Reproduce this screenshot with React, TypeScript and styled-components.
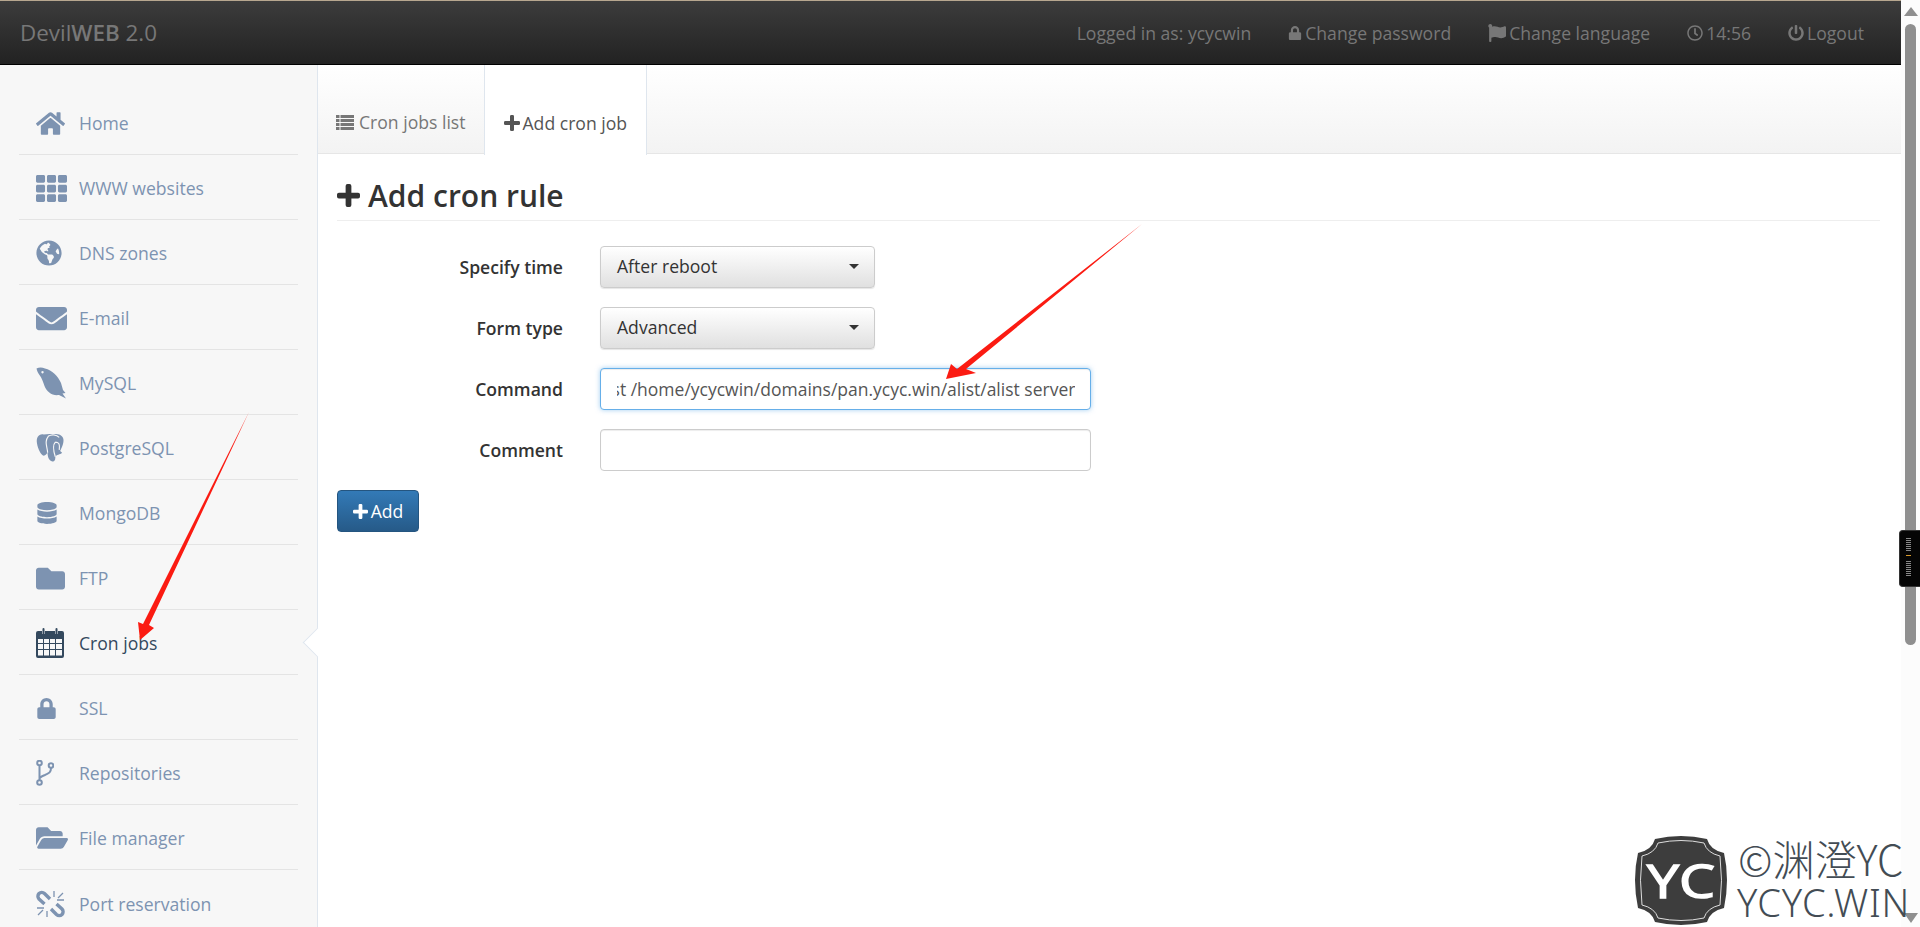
import React, { useEffect, useRef } from "react";
import styled, { createGlobalStyle } from "styled-components";
import {
  FaHome, FaTh, FaGlobeAmericas, FaEnvelope, FaDatabase, FaFolder, FaLock, FaFolderOpen,
  FaFlag, FaRegClock, FaPowerOff,
} from "react-icons/fa";

const Global = createGlobalStyle`
  html, body { margin: 0; padding: 0; height: 100%; overflow: hidden; background: #fff; }
  * { box-sizing: border-box; }
  body { font-family: "Open Sans", "Liberation Sans", sans-serif; }
`;

const Shell = styled.div`
  position: relative;
  display: flex;
  width: 1920px;
  height: 927px;
  overflow: hidden;
`;
const Page = styled.div`
  flex: 1;
  min-width: 0;
  display: flex;
  flex-direction: column;
`;
const TopBar = styled.header`
  height: 65px;
  flex: none;
  display: flex;
  align-items: center;
  justify-content: space-between;
  padding: 0 37px 0 20px;
  border-top: 1px solid #b7a78f;
  border-bottom: 1px solid #000;
  background: linear-gradient(#3c3c3c, #222);
  color: #777;
  font-size: 17.6px;
`;
const Brand = styled.div`
  font-size: 22.4px;
  b { font-weight: 600; }
`;
const TopNav = styled.nav`
  display: flex;
  align-items: center;
  gap: 37px;
`;
const TopItem = styled.span`
  display: flex;
  align-items: center;
  gap: 3px;
  svg { flex: none; }
`;
const Body = styled.div`
  flex: 1;
  min-height: 0;
  display: flex;
`;
const Sidebar = styled.aside`
  width: 318px;
  flex: none;
  padding: 25px 19px 0;
  background: #f7f7f7;
  border-right: 1px solid #dfe6ee;
`;
const NavRow = styled.div<{ $active?: boolean }>`
  position: relative;
  height: 65px;
  display: flex;
  align-items: center;
  padding: 2px 0 0 17px;
  border-bottom: 1px solid #e4e4e4;
  color: ${(p) => (p.$active ? "#34495e" : "#7d93b1")};
  font-size: 17.6px;
  &:last-child { border-bottom: 0; }
`;
const NavIcon = styled.span`
  width: 43px;
  flex: none;
  display: flex;
  align-items: center;
`;
const Notch = styled.span`
  position: absolute;
  right: -30px;
  top: 22px;
  width: 21px;
  height: 21px;
  background: #fff;
  border-left: 1px solid #dfe6ee;
  border-bottom: 1px solid #dfe6ee;
  transform: rotate(45deg);
`;
const Main = styled.main`
  flex: 1;
  min-width: 0;
`;
const TabBar = styled.div`
  height: 89px;
  display: flex;
  background: linear-gradient(#fff, #f3f3f3);
  border-bottom: 1px solid #e6e6e6;
`;
const Tab = styled.div<{ $active?: boolean }>`
  display: flex;
  align-items: center;
  gap: ${(p) => (p.$active ? "3px" : "5px")};
  height: ${(p) => (p.$active ? "90px" : "88px")};
  padding: 26px ${(p) => (p.$active ? "19px" : "18px")} 0;
  font-size: 17.6px;
  color: ${(p) => (p.$active ? "#555" : "#777")};
  background: ${(p) => (p.$active ? "#fff" : "transparent")};
  border-left: ${(p) => (p.$active ? "1px solid #dfe6ee" : "0")};
  border-right: ${(p) => (p.$active ? "1px solid #dfe6ee" : "0")};
`;
const Content = styled.div`
  padding: 23px 21px 0 19px;
`;
const Heading = styled.h2`
  margin: 0 0 25px;
  height: 44px;
  display: flex;
  align-items: center;
  gap: 8px;
  padding-bottom: 6px;
  border-bottom: 1px solid #eee;
  font-size: 30px;
  line-height: 34px;
  font-weight: 600;
  color: #333;
`;
const FormRow = styled.div`
  display: flex;
  align-items: center;
  height: 42px;
  margin-bottom: 19px;
`;
const Label = styled.label`
  width: 226px;
  flex: none;
  margin-right: 37px;
  text-align: right;
  font-size: 17.6px;
  font-weight: 600;
  color: #333;
`;
const SelectBox = styled.div`
  width: 275px;
  height: 42px;
  display: flex;
  align-items: center;
  justify-content: space-between;
  padding: 0 15px 2px 16px;
  border: 1px solid #ccc;
  border-radius: 4px;
  background: linear-gradient(#fff, #e0e0e0);
  box-shadow: 0 1px 1px rgba(0, 0, 0, 0.1);
  font-size: 17.6px;
  color: #333;
`;
const Caret = styled.span`
  width: 0;
  height: 0;
  border-left: 5px solid transparent;
  border-right: 5px solid transparent;
  border-top: 5px solid #333;
`;
const TextInput = styled.input<{ $focus?: boolean }>`
  width: 491px;
  height: 42px;
  padding: 0 15px 0 16px;
  border: 1px solid ${(p) => (p.$focus ? "#66afe9" : "#ccc")};
  border-radius: 4px;
  outline: 0;
  background: #fff;
  box-shadow: ${(p) => (p.$focus ? "inset 0 1px 1px rgba(0,0,0,.075), 0 0 5px rgba(102,175,233,.6)" : "inset 0 1px 1px rgba(0,0,0,.075)")};
  font: 17.5px "Open Sans", sans-serif;
  color: #555;
`;
const AddButton = styled.button`
  width: 82px;
  height: 42px;
  padding: 0;
  display: flex;
  align-items: center;
  justify-content: center;
  gap: 3px;
  border: 1px solid #245580;
  border-radius: 4px;
  background: linear-gradient(#337ab7, #265a88);
  color: #fff;
  font: 17.6px "Open Sans", sans-serif;
`;
const ScrollGutter = styled.div`
  width: 19px;
  flex: none;
  display: flex;
  flex-direction: column;
  align-items: flex-start;
  padding: 7px 0 4px 3px;
  background: #fcfcfc;
`;
const ArrowUp = styled.span`
  border-left: 7px solid transparent;
  border-right: 7px solid transparent;
  border-bottom: 9px solid #8f8f8f;
`;
const ArrowDown = styled.span`
  margin-top: auto;
  border-left: 7px solid transparent;
  border-right: 7px solid transparent;
  border-top: 10px solid #8f8f8f;
`;
const Thumb = styled.span`
  margin: 8px 0 0 1px;
  width: 11px;
  height: 621px;
  border-radius: 6px;
  background: #8f8f8f;
`;
const SideWidget = styled.div`
  position: absolute;
  left: 1899px;
  top: 530px;
  width: 21px;
  height: 57px;
  display: flex;
  flex-direction: column;
  align-items: center;
  gap: 1px;
  padding: 7px 3px 0 0;
  border: 1px solid #333;
  border-right: 0;
  border-radius: 4px 0 0 4px;
  background: #050505;
`;
const Tick = styled.span<{ $hot?: boolean }>`
  width: 5px;
  height: 1px;
  flex: none;
  margin: ${(p) => (p.$hot ? "3px 0 4px" : "0")};
  background: ${(p) => (p.$hot ? "#d89a2a" : "#888")};
`;
const Annotations = styled.svg`
  position: absolute;
  inset: 0;
  pointer-events: none;
`;
const Watermark = styled.div`
  position: absolute;
  left: 1635px;
  top: 836px;
  display: flex;
  gap: 10px;
  pointer-events: none;
`;
const WatermarkText = styled.div`
  display: flex;
  flex-direction: column;
  gap: 1px;
  margin-top: -2px;
  color: #434c54;
  font-weight: 300;
  white-space: nowrap;
`;
const WmTop = styled.span`
  font-family: "Noto Sans CJK SC", sans-serif;
  font-size: 42px;
  line-height: 48px;
  margin-left: 1px;
`;
const WmBottom = styled.span`
  font-family: "Noto Sans", sans-serif;
  font-size: 38px;
  line-height: 38px;
  letter-spacing: 0.7px;
`;

const PlusIcon = ({ size }: { size: number }) => (
  <svg width={size} height={size} viewBox="0 0 24 24" fill="currentColor">
    <path d="M9 2a2 2 0 0 1 2-2h2a2 2 0 0 1 2 2v7h7a2 2 0 0 1 2 2v2a2 2 0 0 1-2 2h-7v7a2 2 0 0 1-2 2h-2a2 2 0 0 1-2-2v-7H2a2 2 0 0 1-2-2v-2a2 2 0 0 1 2-2h7z" />
  </svg>
);
const ListIcon = () => (
  <svg width="18" height="15" viewBox="0 0 18 15" fill="currentColor">
    <path d="M0 0h18v3H0zM0 4h18v3H0zM0 8h18v3H0zM0 12h18v3H0z" />
    <path d="M3.500 0h1v15h-1z" fill="#f8f8f8" />
  </svg>
);
const CalendarIcon = () => (
  <svg width="28" height="30" viewBox="0 0 28 30" fill="currentColor">
    <path fillRule="evenodd" d="M2 3h4v3h3V3h10v3h3V3h4a2 2 0 0 1 2 2v23a2 2 0 0 1-2 2H2a2 2 0 0 1-2-2V5a2 2 0 0 1 2-2zM2 11v4h5v-4zm6 0v4h5v-4zm6 0v4h5v-4zm6 0v4h6v-4zM2 16v5h5v-5zm6 0v5h5v-5zm6 0v5h5v-5zm6 0v5h6v-5zM2 22v5.500h5V22zm6 0v5.500h5V22zm6 0v5.500h5V22zm6 0v5.500h6V22z" />
    <rect x="6.500" y="0" width="2" height="7" rx="1" />
    <rect x="19.500" y="0" width="2" height="7" rx="1" />
  </svg>
);
const ForkIcon = () => (
  <svg width="18" height="26" viewBox="0 0 18 26" fill="none" stroke="currentColor" strokeWidth="2">
    <circle cx="3.500" cy="3" r="2.300" />
    <circle cx="15" cy="5.500" r="2.300" />
    <circle cx="3.500" cy="22.500" r="2.300" />
    <path d="M3.500 5.500v14.500M15 8c0 5-3 5.500-6 7-3 1.300-5.500 2-5.500 4" />
  </svg>
);
const DolphinIcon = () => (
  <svg width="30" height="32" viewBox="0 0 30 32" fill="currentColor">
    <path fillRule="evenodd" d="M.5 1.500C3 0 6 0 9 1.500 16 3 22 9 25 16l2 7 2.500 3-3 .5 3.500 5-7-3.500C16 29 11 25 8.500 19 7 15 6 11 3.500 8 2 6 1 4 .5 1.500zM6.500 4a1.200 1.200 0 1 0 .01 0z" />
  </svg>
);
const ElephantIcon = () => (
  <svg width="29" height="30" viewBox="0 0 30 30" fill="currentColor">
    <path d="M8 1C3 0 0 4 1 10c1 6 4 12 7 13 2 0 3-2 4-3 0 4 1 8 5 9 3 0 3-3 3-5 1-2 5-2 7-4l-2-2c3-6 5-12 2-15-3-3-7-3-10-2-3-1-6 0-9 0z" />
    <path fill="none" stroke="#f7f7f7" strokeWidth="1.200" d="M12 20C12 14 8 9 13 2.500M20 24c-2-6-3-12 0-15M20 9c3 0 5 1 4 8M13 2.500C16 1 21 1 24 4" />
  </svg>
);
const BrokenLinkIcon = () => (
  <svg width="29" height="28" viewBox="0 0 29 28" fill="none" stroke="currentColor">
    <path strokeWidth="3.400" d="M14 9L8.500 3.500a4 4 0 0 0-5.500 0 4 4 0 0 0 0 5.500L8.500 14M15 19l5.500 5.500a4 4 0 0 0 5.500 0 4 4 0 0 0 0-5.500L20.500 14" />
    <path strokeWidth="1.300" d="M18 1v6M22 8l5-5M21 10h7M11 27v-6M7 20l-5 5M8 18H1" />
  </svg>
);

const nav: [string, React.ReactNode][] = [
  ["Home", <FaHome size={29} />],
  ["WWW websites", <FaTh size={31} />],
  ["DNS zones", <FaGlobeAmericas size={26} />],
  ["E-mail", <FaEnvelope size={31} />],
  ["MySQL", <DolphinIcon />],
  ["PostgreSQL", <ElephantIcon />],
  ["MongoDB", <FaDatabase size={22} />],
  ["FTP", <FaFolder size={29} />],
  ["Cron jobs", <CalendarIcon />],
  ["SSL", <FaLock size={21} />],
  ["Repositories", <ForkIcon />],
  ["File manager", <FaFolderOpen size={32} />],
  ["Port reservation", <BrokenLinkIcon />],
];

export default function App() {
  const cmd = useRef<HTMLInputElement>(null);
  useEffect(() => {
    if (cmd.current) cmd.current.scrollLeft = cmd.current.scrollWidth;
  }, []);
  return (
    <Shell>
      <Global />
      <Page>
        <TopBar>
          <Brand>Devil<b>WEB</b> 2.0</Brand>
          <TopNav>
            <TopItem>Logged in as: ycycwin</TopItem>
            <TopItem><FaLock size={14} />Change password</TopItem>
            <TopItem><FaFlag size={18} />Change language</TopItem>
            <TopItem><FaRegClock size={16} />14:56</TopItem>
            <TopItem><FaPowerOff size={16} />Logout</TopItem>
          </TopNav>
        </TopBar>
        <Body>
          <Sidebar>
            {nav.map(([label, icon]) => (
              <NavRow key={label} $active={label === "Cron jobs"}>
                <NavIcon>{icon}</NavIcon>
                {label}
                {label === "Cron jobs" && <Notch />}
              </NavRow>
            ))}
          </Sidebar>
          <Main>
            <TabBar>
              <Tab><ListIcon />Cron jobs list</Tab>
              <Tab $active><PlusIcon size={16} />Add cron job</Tab>
            </TabBar>
            <Content>
              <Heading><PlusIcon size={23} />Add cron rule</Heading>
              <FormRow>
                <Label>Specify time</Label>
                <SelectBox>After reboot<Caret /></SelectBox>
              </FormRow>
              <FormRow>
                <Label>Form type</Label>
                <SelectBox>Advanced<Caret /></SelectBox>
              </FormRow>
              <FormRow>
                <Label>Command</Label>
                <TextInput ref={cmd} $focus readOnly value="alist /home/ycycwin/domains/pan.ycyc.win/alist/alist server" />
              </FormRow>
              <FormRow>
                <Label>Comment</Label>
                <TextInput readOnly value="" />
              </FormRow>
              <AddButton><PlusIcon size={15} />Add</AddButton>
            </Content>
          </Main>
        </Body>
      </Page>
      <ScrollGutter>
        <ArrowUp />
        <Thumb />
        <ArrowDown />
      </ScrollGutter>
      <SideWidget>
        {Array.from({ length: 16 }, (_, i) => <Tick key={i} $hot={i === 7} />)}
      </SideWidget>
      <Annotations width="1920" height="927" viewBox="0 0 1920 927">
        <path d="M249 412 L149 625 L154 628 L140 640 L138 622 L143 624 Z" fill="#fb1b12" />
        <path d="M1142 224 L966 369 L976 373 L946 379 L951 364 L957 369 Z" fill="#fb1b12" />
      </Annotations>
      <Watermark>
        <svg width="92" height="89" viewBox="0 0 92 89">
          <path d="M20 3 Q46 -3 72 3 Q75 14 89 17 Q92 30 92 44 Q92 58 89 72 Q75 75 72 86 Q46 92 20 86 Q17 75 3 72 Q0 58 0 44 Q0 30 3 17 Q17 14 20 3 Z" fill="#3d3d3d" />
          <path d="M23 7 Q46 2 69 7 Q72 17 85 20 Q88 44 85 69 Q72 72 69 82 Q46 87 23 82 Q20 72 7 69 Q4 44 7 20 Q20 17 23 7 Z" fill="none" stroke="#ddd" strokeWidth="1" />
          <text x="46" y="62" textAnchor="middle" textLength="68" lengthAdjust="spacingAndGlyphs" fontFamily="Open Sans, sans-serif" fontSize="46" fontWeight="400" fill="#fff" stroke="#fff" strokeWidth="1.500">YC</text>
        </svg>
        <WatermarkText>
          <WmTop>©渊澄YC</WmTop>
          <WmBottom>YCYC.WIN</WmBottom>
        </WatermarkText>
      </Watermark>
    </Shell>
  );
}
